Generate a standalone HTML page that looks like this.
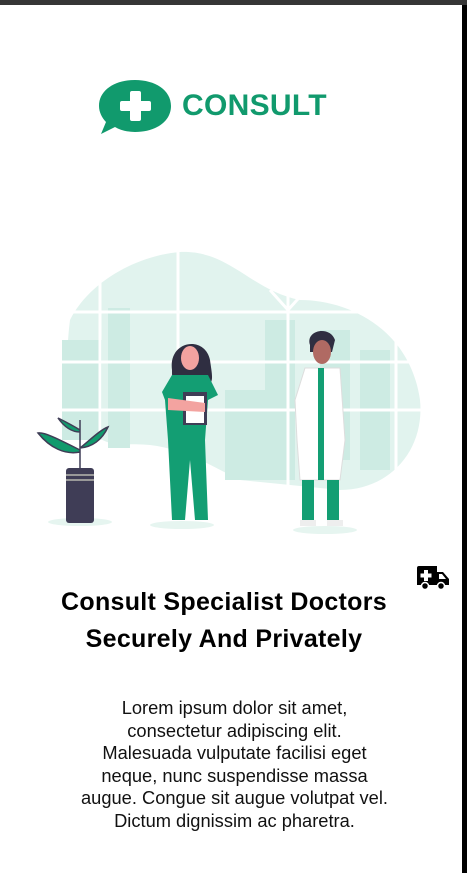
<!DOCTYPE html>
<html><head><style>
body{margin:0;width:467px;height:873px;background:#fff;position:relative;overflow:hidden;font-family:"Liberation Sans",sans-serif}
.top{position:absolute;left:0;top:0;width:467px;height:5px;background:#363636}
.rb{position:absolute;left:462px;top:5px;width:5px;height:868px;background:#000}
.logo{position:absolute;left:182px;top:89px;font-weight:bold;font-size:30px;color:#119a6d;letter-spacing:0.3px}
h1{position:absolute;left:0;width:448px;top:584px;margin:0;text-align:center;font-size:25px;line-height:37px;font-weight:bold;color:#000;letter-spacing:0.3px}
p{position:absolute;left:0;width:469px;top:697px;margin:0;text-align:center;font-size:18.3px;line-height:22.6px;color:#111}
</style></head><body>
<div class="top"></div><div class="rb"></div>
<svg style="position:absolute;left:99px;top:80px" width="72" height="54" viewBox="0 0 72 54">
<path d="M36 0C56 0 72 10 72 26C72 42 56 52 36 52C28 52 21 50 16 47L2 54L7 42C3 38 0 32 0 26C0 10 16 0 36 0Z" fill="#119a6d"/>
<rect x="31" y="11" width="11" height="30" rx="2" fill="#fff"/><rect x="21" y="21" width="31" height="10" rx="2" fill="#fff"/>
</svg>
<div class="logo">CONSULT</div>
<svg style="position:absolute;left:0;top:240px" width="467" height="300" viewBox="0 240 467 300">
<path d="M70 320C90 280 140 255 180 252C230 250 250 290 300 300C350 300 410 330 420 400C425 450 390 490 340 490L240 480C200 460 170 440 120 445C80 440 60 400 70 320Z" fill="#e1f3ee"/>
<g fill="#cdebe3"><rect x="62" y="340" width="40" height="100"/><rect x="108" y="308" width="22" height="140"/><rect x="265" y="320" width="30" height="160"/><rect x="320" y="330" width="30" height="130"/><rect x="360" y="350" width="30" height="120"/><rect x="225" y="390" width="40" height="90"/></g>
<g stroke="#fff" stroke-width="3"><line x1="60" y1="312" x2="430" y2="312"/><line x1="60" y1="362" x2="430" y2="362"/><line x1="60" y1="410" x2="430" y2="410"/><line x1="100" y1="280" x2="100" y2="460"/><line x1="178" y1="250" x2="178" y2="440"/><line x1="288" y1="290" x2="288" y2="490"/><line x1="396" y1="340" x2="396" y2="480"/><line x1="270" y1="290" x2="288" y2="310"/><line x1="306" y1="290" x2="288" y2="310"/></g>
<ellipse cx="80" cy="522" rx="32" ry="4" fill="#e6f5f0"/><ellipse cx="182" cy="525" rx="32" ry="4" fill="#e6f5f0"/><ellipse cx="325" cy="530" rx="32" ry="4" fill="#e6f5f0"/>
<path d="M80 470L80 420M80 450C60 440 45 432 38 433C50 448 65 455 80 452M80 448C90 440 100 430 108 427C102 440 92 447 80 448M80 430C72 425 62 420 58 418C65 428 72 432 80 432" stroke="#3f3d56" stroke-width="1.5" fill="#119a6d"/>
<rect x="66" y="468" width="28" height="55" rx="3" fill="#3f3d56"/><rect x="66" y="474" width="28" height="2" fill="#999"/><rect x="66" y="479" width="28" height="2" fill="#999"/>
<path d="M172 370C168 340 205 335 210 360C212 375 215 385 205 385L180 385C172 385 172 378 172 370Z" fill="#2f2e41"/>
<ellipse cx="190" cy="358" rx="9" ry="12" fill="#f3a3a0"/>
<path d="M172 375L208 375L218 395L208 400L205 440L208 520L195 520L190 460L185 520L172 520L168 440L165 400L162 392Z" fill="#139e73"/>
<rect x="183" y="392" width="24" height="33" fill="#3f3d56"/><rect x="186" y="396" width="18" height="27" fill="#fff"/>
<path d="M168 398L205 403L205 412L168 410Z" fill="#f3a3a0"/>
<path d="M310 345C305 330 330 325 335 340L332 352L310 352Z" fill="#2f2e41"/>
<ellipse cx="322" cy="352" rx="9" ry="12" fill="#b06a63"/>
<path d="M305 368L340 368L345 440L340 480L300 480L297 440L295 400Z" fill="#fff" stroke="#ddd"/>
<rect x="302" y="480" width="12" height="42" fill="#139e73"/><rect x="327" y="480" width="12" height="42" fill="#139e73"/>
<rect x="318" y="368" width="6" height="112" fill="#139e73"/>
<rect x="300" y="520" width="16" height="6" fill="#eee"/><rect x="327" y="520" width="16" height="6" fill="#eee"/>
</svg>
<svg style="position:absolute;left:417px;top:566px" width="33" height="25" viewBox="0 0 33 25">
<path d="M0 2Q0 0 2 0H20V6H26L32 13V19H0Z" fill="#000"/><path d="M22 8H25L29 13H22Z" fill="#fff"/>
<rect x="7" y="4" width="4" height="11" fill="#fff"/><rect x="3.5" y="7.5" width="11" height="4" fill="#fff"/>
<circle cx="8" cy="20" r="3.5" fill="#000" stroke="#fff" stroke-width="1.5"/><circle cx="24" cy="20" r="3.5" fill="#000" stroke="#fff" stroke-width="1.5"/>
</svg>
<h1>Consult Specialist Doctors<br>Securely And Privately</h1>
<p>Lorem ipsum dolor sit amet,<br>consectetur adipiscing elit.<br>Malesuada vulputate facilisi eget<br>neque, nunc suspendisse massa<br>augue. Congue sit augue volutpat vel.<br>Dictum dignissim ac pharetra.</p>
</body></html>
